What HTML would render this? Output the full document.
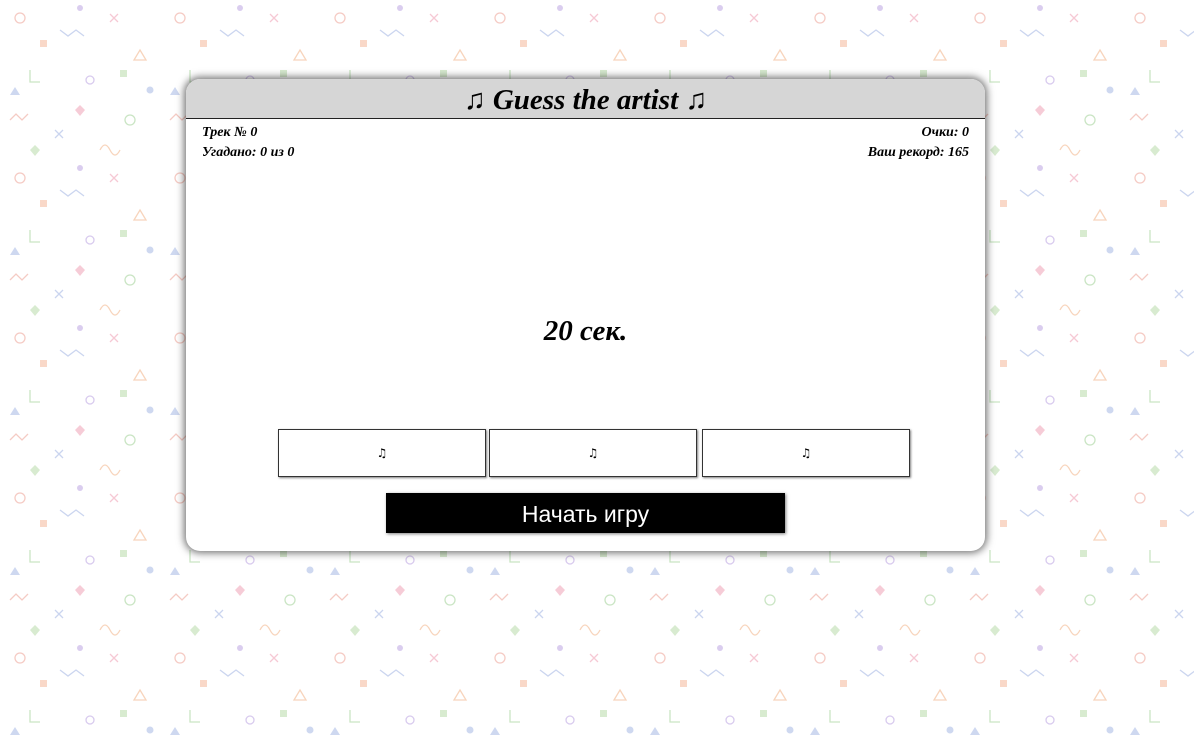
<!DOCTYPE html>
<html><head><meta charset="utf-8"><style>
html,body{margin:0;padding:0;width:1194px;height:735px;overflow:hidden;background:#fff;}
#bg{position:absolute;left:0;top:0;}
.card{position:absolute;left:186px;top:79px;width:799px;height:472px;background:#fff;border-radius:14px;box-shadow:0 0 8px 2px rgba(0,0,0,0.55);overflow:hidden;font-family:"Liberation Serif","Noto Serif CJK SC",serif;}
.hdr{height:39px;background:#d6d6d6;border-bottom:1.5px solid #222;text-align:center;font-size:29px;font-weight:bold;font-style:italic;line-height:42px;color:#000;}
.st{position:absolute;font-size:14px;font-weight:bold;font-style:italic;line-height:20px;}
.timer{position:absolute;left:0;width:100%;top:236px;text-align:center;font-size:29px;font-weight:bold;font-style:italic;}
.b{position:absolute;top:350px;width:206px;height:46px;border:1.5px solid #333;box-shadow:1px 1px 2px rgba(0,0,0,.5);background:#fff;text-align:center;line-height:46px;font-size:12px;font-family:"DejaVu Sans",sans-serif;}
.start{position:absolute;left:200px;top:414px;width:399px;height:40px;background:#000;color:#fff;text-align:center;line-height:42px;font-size:23px;font-family:"Liberation Sans",sans-serif;box-shadow:1px 1px 3px rgba(0,0,0,.5);}
</style></head><body>
<svg id="bg" width="1194" height="735">
<defs><pattern id="p" width="160" height="160" patternUnits="userSpaceOnUse">
<g fill="none" stroke-width="1.3" opacity=".75">
<circle cx="20" cy="18" r="5" stroke="#f2b9b0"/>
<path d="M60 30l8 6 8-6 8 6" stroke="#b9c7ea"/>
<path d="M110 14l8 8M118 14l-8 8" stroke="#f3b7c6"/>
<path d="M140 50l6 10h-12z" stroke="#f5c6a5"/>
<path d="M30 70v12h10" stroke="#b8dcb0"/>
<circle cx="90" cy="80" r="4" stroke="#cbb8e8"/>
<path d="M10 120l6-6 6 6 6-6" stroke="#f2b9b0"/>
<path d="M55 130l8 8M63 130l-8 8" stroke="#b9c7ea"/>
<circle cx="130" cy="120" r="5" stroke="#b8dcb0"/>
<path d="M100 150q5-10 10 0t10 0" stroke="#f5c6a5"/>
</g>
<g opacity=".7">
<rect x="40" y="40" width="7" height="7" fill="#f6c8b0"/>
<circle cx="150" cy="90" r="3.5" fill="#b9c7ea"/>
<path d="M75 110l5-5 5 5-5 6z" fill="#f3b7c6"/>
<path d="M10 95l5-8 5 8z" fill="#b9c7ea"/>
<rect x="120" y="70" width="7" height="7" fill="#c8e2bc"/>
<circle cx="80" cy="8" r="3" fill="#cbb8e8"/>
<path d="M30 150l5-5 5 5-5 6z" fill="#c8e2bc"/>
</g></pattern></defs>
<rect width="1194" height="735" fill="url(#p)"/>
</svg>
<div class="card">
<div class="hdr">♫ Guess the artist ♫</div>
<div class="st" style="left:16px;top:44px">Трек № 0<br>Угадано: 0 из 0</div>
<div class="st" style="right:16px;top:44px;text-align:right">Очки: 0<br>Ваш рекорд: 165</div>
<div class="timer">20 сек.</div>
<div class="b" style="left:92px">♫</div>
<div class="b" style="left:303px">♫</div>
<div class="b" style="left:516px">♫</div>
<div class="start">Начать игру</div>
</div>
</body></html>
